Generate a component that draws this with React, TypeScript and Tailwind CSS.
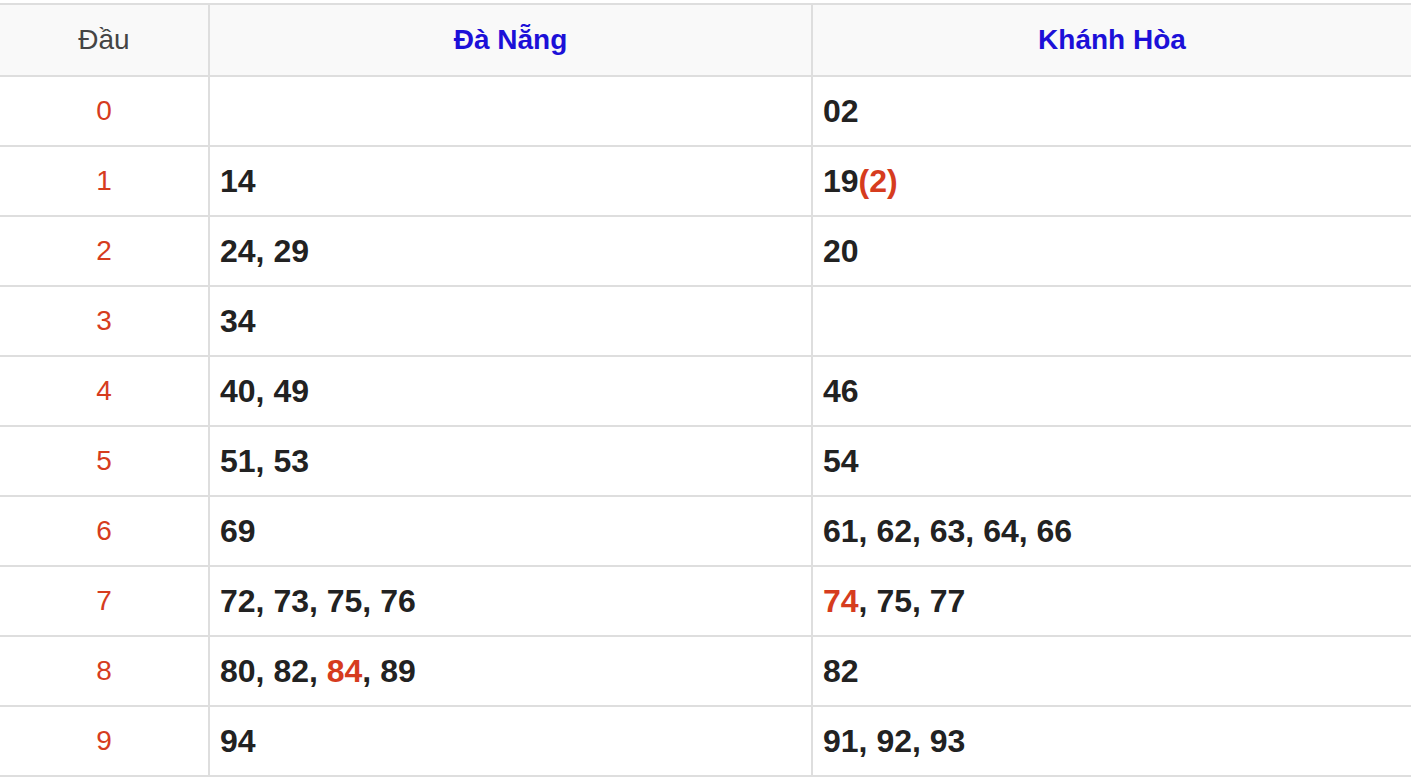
const rows: { head: string; dn: [string, boolean][]; kh: [string, boolean][]; khExtra?: string }[] = [
  { head: "0", dn: [], kh: [["02", false]] },
  { head: "1", dn: [["14", false]], kh: [["19", false]], khExtra: "(2)" },
  { head: "2", dn: [["24", false], ["29", false]], kh: [["20", false]] },
  { head: "3", dn: [["34", false]], kh: [] },
  { head: "4", dn: [["40", false], ["49", false]], kh: [["46", false]] },
  { head: "5", dn: [["51", false], ["53", false]], kh: [["54", false]] },
  { head: "6", dn: [["69", false]], kh: [["61", false], ["62", false], ["63", false], ["64", false], ["66", false]] },
  { head: "7", dn: [["72", false], ["73", false], ["75", false], ["76", false]], kh: [["74", true], ["75", false], ["77", false]] },
  { head: "8", dn: [["80", false], ["82", false], ["84", true], ["89", false]], kh: [["82", false]] },
  { head: "9", dn: [["94", false]], kh: [["91", false], ["92", false], ["93", false]] },
];

function Nums({ items, extra }: { items: [string, boolean][]; extra?: string }) {
  return (
    <>
      {items.map(([n, hot], i) => (
        <span key={i}>
          {i > 0 && ", "}
          <span className={hot ? "text-[#d63c1e]" : ""}>{n}</span>
        </span>
      ))}
      {extra && <span className="text-[#d63c1e]">{extra}</span>}
    </>
  );
}

export default function App() {
  return (
    <div className="bg-white pt-[3px] font-['Liberation_Sans',Arial,sans-serif]">
      <div className="border-b-2 border-[#dedede]">
        <div className="grid grid-cols-[208px_603px_1fr] h-[72px] border-t-2 border-[#dedede] bg-[#f9f9f9]">
          <div className="flex items-center justify-center text-[28px] text-[#444]">Đầu</div>
          <div className="flex items-center justify-center border-l-2 border-[#dedede] text-[28px] font-bold text-[#1c10d8]">
            Đà Nẵng
          </div>
          <div className="flex items-center justify-center border-l-2 border-[#dedede] text-[28px] font-bold text-[#1c10d8]">
            Khánh Hòa
          </div>
        </div>
        {rows.map((r) => (
          <div key={r.head} className="grid grid-cols-[208px_603px_1fr] h-[70px] border-t-2 border-[#dedede]">
            <div className="flex items-center justify-center text-[28px] text-[#d63c1e]">{r.head}</div>
            <div className="flex items-center border-l-2 border-[#dedede] pl-[10px] text-[32px] font-bold text-[#222]">
              <Nums items={r.dn} />
            </div>
            <div className="flex items-center border-l-2 border-[#dedede] pl-[10px] text-[32px] font-bold text-[#222]">
              <Nums items={r.kh} extra={r.khExtra} />
            </div>
          </div>
        ))}
      </div>
    </div>
  );
}
